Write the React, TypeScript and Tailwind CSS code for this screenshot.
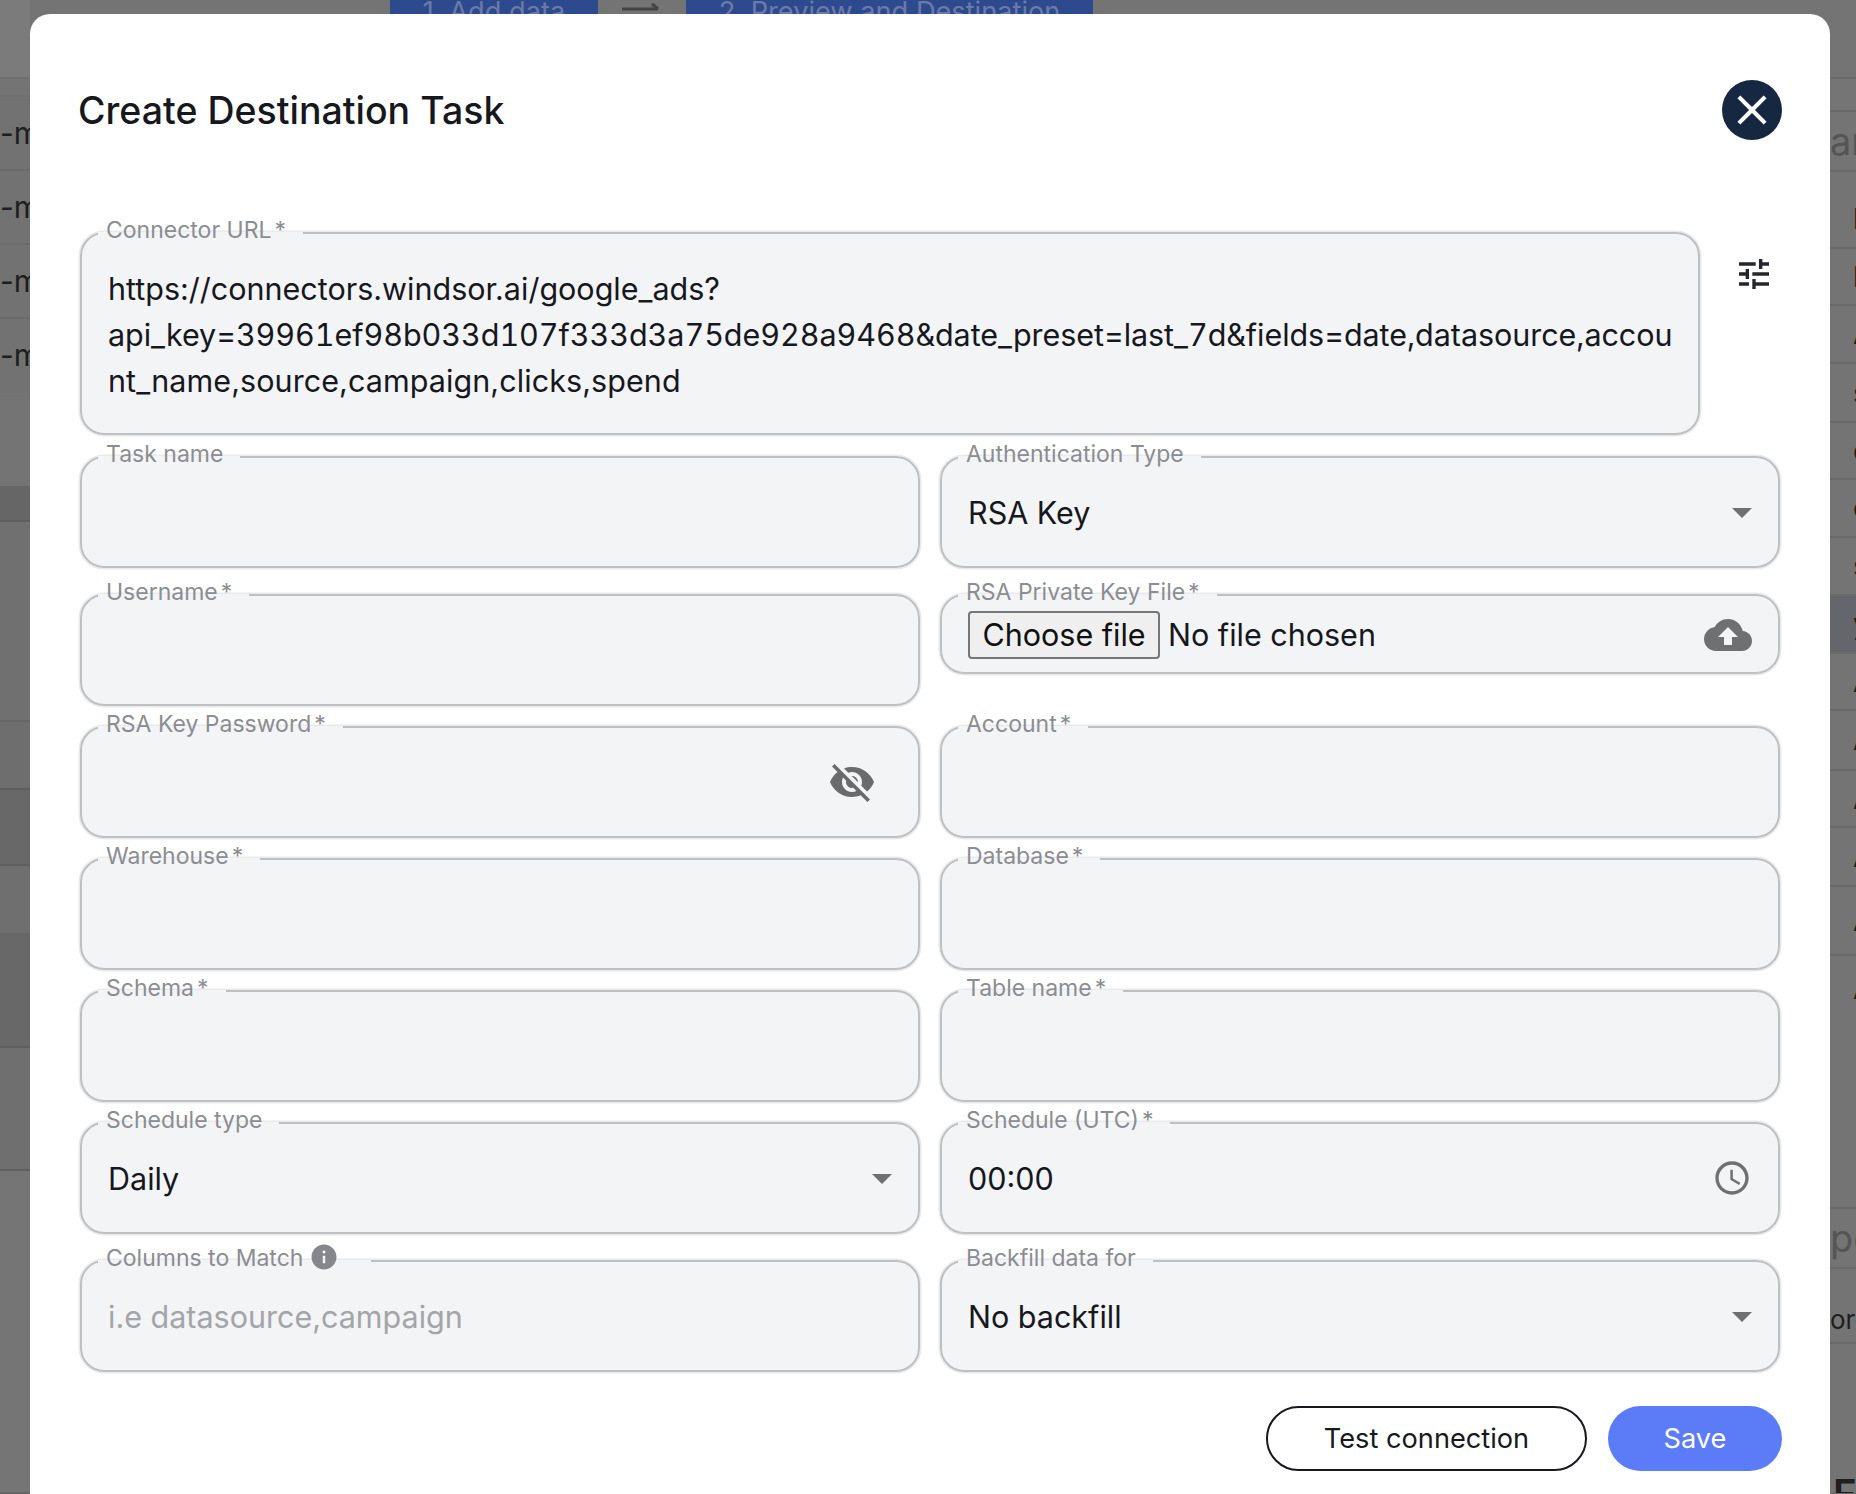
import React from "react";
import { MdTune, MdCloudUpload, MdVisibilityOff, MdAccessTime, MdInfo, MdClose } from "react-icons/md";

const font = { fontFamily: "Inter, 'Liberation Sans', sans-serif" };

function Field({
  label,
  required,
  h = "h-[125px]",
  className = "",
  info,
  children,
}: {
  label: string;
  required?: boolean;
  h?: string;
  className?: string;
  info?: boolean;
  children?: React.ReactNode;
}) {
  return (
    <fieldset
      className={`${h} ${className} min-w-0 w-full rounded-[24px] border-2 border-[#bfc0c2] bg-[#f3f4f6] p-0 shadow-[0_0_0_1.5px_#e8e9eb] flex flex-col`}
    >
      <legend className={`ml-[16px] flex h-[28px] items-center pl-[8px] ${info ? "pr-[32px]" : "pr-[17px]"} text-[23px] leading-[28px] text-[#8b8d92]`}>
        <span className="-translate-y-[3px]">{label}</span>
        {required && <span className="ml-[3px] -translate-y-[3px]">*</span>}
        {info && <MdInfo className="ml-[6px] -mt-[8px] text-[#85878c]" size={30} />}
      </legend>
      {children}
    </fieldset>
  );
}

function Value({ children, muted }: { children?: React.ReactNode; muted?: boolean }) {
  return (
    <div className={`flex flex-1 items-center justify-between pb-[12px] pl-[26px] pr-[20px] text-[30.5px] leading-[46px] ${muted ? "text-[#a3a5a9]" : "text-[#16181d]"}`}>
      {children}
    </div>
  );
}

function Caret() {
  return (
    <svg width="20" height="10" viewBox="0 0 20 10" className="mr-[6px] shrink-0">
      <path d="M0 0h20L10 10z" fill="#6f7072" />
    </svg>
  );
}

const leftRows = [
  { h: "h-[79px]", c: "bg-[#7b7b7b] border-[#6f6f6f]", t: "" },
  { h: "h-[18px]", c: "bg-[#747474] border-[#707070]", t: "" },
  { h: "h-[74px]", c: "bg-[#727272] border-[#6b6b6b]", t: "-m" },
  { h: "h-[74px]", c: "bg-[#727272] border-[#6b6b6b]", t: "-m" },
  { h: "h-[74px]", c: "bg-[#727272] border-[#6b6b6b]", t: "-m" },
  { h: "h-[74px]", c: "bg-[#727272] border-[#727272]", t: "-m" },
  { h: "h-[93px]", c: "bg-[#747474] border-[#747474]", t: "" },
  { h: "h-[36px]", c: "bg-[#666666] border-[#5f5f5f]", t: "" },
  { h: "h-[200px]", c: "bg-[#707070] border-[#666666]", t: "" },
  { h: "h-[68px]", c: "bg-[#6e6e6e] border-[#5d5d5d]", t: "" },
  { h: "h-[76px]", c: "bg-[#686868] border-[#5f5f5f]", t: "" },
  { h: "h-[67px]", c: "bg-[#6f6f6f] border-[#6f6f6f]", t: "" },
  { h: "h-[115px]", c: "bg-[#686868] border-[#5f5f5f]", t: "" },
  { h: "h-[123px]", c: "bg-[#6f6f6f] border-[#5f5f5f]", t: "" },
  { h: "h-[323px]", c: "bg-[#757575] border-[#666666]", t: "" },
];

const rightRows = [
  { h: "h-[79px]", t: "" },
  { h: "h-[33px]", t: "", c: "bg-[#757575]" },
  { h: "h-[60px]", t: "ar", c: "text-[#555]", x: "pl-0 text-[38px]" },
  { h: "h-[77px]", t: "l", y: "items-start pt-[26px]" },
  { h: "h-[57px]", t: "l" },
  { h: "h-[58px]", t: "A" },
  { h: "h-[59px]", t: "s" },
  { h: "h-[57px]", t: "c" },
  { h: "h-[58px]", t: "c" },
  { h: "h-[58px]", t: "s" },
  { h: "h-[58px]", t: "y", c: "bg-[#65656c]" },
  { h: "h-[57px]", t: "A" },
  { h: "h-[60px]", t: "A" },
  { h: "h-[57px]", t: "A" },
  { h: "h-[59px]", t: "A" },
  { h: "h-[69px]", t: "A" },
  { h: "h-[253px]", t: "A", y: "items-start pt-[12px]" },
  { h: "h-[60px]", t: "pe", c: "text-[#555]", x: "pl-0 text-[38px]" },
  { h: "h-[75px]", t: "or-", x: "pl-0 text-[26px]", y: "items-start pt-[31px]" },
  { h: "h-[151px]", t: "F", x: "pl-[3px] text-[40px] leading-[40px] font-semibold", y: "items-start pt-[130px]" },
];

export default function App() {
  return (
    <div style={font} className="relative h-[1494px] w-[1856px] overflow-hidden bg-[#747474]">
      {/* dimmed page behind the dialog */}
      <div className="flex h-[14px] items-start overflow-hidden pl-[390px] text-[27.2px] leading-[30px] text-[#6a7ba8]">
        <div className="flex h-[14px] w-[208px] justify-center bg-[#2e4a8e]">
          <span className="-mt-[3px] whitespace-nowrap">1. Add data</span>
        </div>
        <svg width="40" height="14" viewBox="0 0 40 14" className="ml-[24px]">
          <path d="M0 9h36M30 4l6 5" stroke="#444444" strokeWidth="3" fill="none" />
        </svg>
        <div className="ml-[24px] flex h-[14px] w-[407px] justify-center bg-[#2e4a8e]">
          <span className="-mt-[3px] whitespace-nowrap">2. Preview and Destination</span>
        </div>
      </div>
      <div className="absolute left-0 top-0 w-[30px] overflow-hidden">
        {leftRows.map((r, i) => (
          <div key={i} className={`${r.h} ${r.c} flex items-center overflow-hidden whitespace-nowrap border-b-2 text-[30px] text-[#1e1e1e]`}>
            {r.t}
          </div>
        ))}
      </div>
      <div className="absolute right-0 top-0 w-[26px] overflow-hidden">
        {rightRows.map((r, i) => (
          <div
            key={i}
            className={`${r.h} ${r.c ?? ""} ${r.x ?? "pl-[23px] text-[28px]"} ${r.y ?? "items-center"} flex overflow-hidden whitespace-nowrap border-b-2 border-[#696969] text-[#1e1e1e]`}
          >
            {r.t}
          </div>
        ))}
      </div>

      {/* dialog */}
      <div className="absolute left-[30px] top-[14px] h-[1500px] w-[1800px] rounded-[20px] bg-white px-[48px] pt-[66px]">
        <div className="flex h-[60px] items-center justify-between">
          <h1 className="mt-[2px] text-[37.5px] font-medium leading-[60px] text-[#16181d]">Create Destination Task</h1>
          <button className="flex h-[60px] w-[60px] items-center justify-center rounded-full bg-[#152741] text-white">
            <MdClose size={50} />
          </button>
        </div>

        <div className="mt-[79px] flex items-start px-[2px]">
          <Field label="Connector URL" required h="h-[216px]" className="!w-[1620px] shrink-0">
            <div className="whitespace-nowrap px-[26px] pt-[19px] text-[30.5px] leading-[46px] text-[#16181d]">
              https://connectors.windsor.ai/google_ads?
              <br />
              <span className="tabular-nums tracking-[-0.05px]">
                api_key=39961ef98b033d107f333d3a75de928a9468&amp;date_preset=last_7d&amp;fields=date,datasource,accou
              </span>
              <br />
              <span className="tracking-[0.08px]">nt_name,source,campaign,clicks,spend</span>
            </div>
          </Field>
          <MdTune size={40} className="ml-[34px] mt-[35px] text-[#24262b]" />
        </div>

        <div className="grid grid-cols-2 gap-x-[20px] px-[2px]">
          <Field label="Task name" className="mt-[8px]" />
          <Field label="Authentication Type" className="mt-[8px]">
            <Value>
              RSA Key
              <Caret />
            </Value>
          </Field>

          <Field label="Username" required className="mt-[13px]" />
          <Field label="RSA Private Key File" required h="h-[93px]" className="mt-[13px]">
            <div className="flex flex-1 items-center justify-between pb-[11px] pl-[26px] pr-[26px] text-[30.5px] text-[#16181d]">
              <div className="flex items-center">
                <span className="flex h-[48px] w-[192px] items-center justify-center rounded-[4px] border-2 border-[#767676] bg-[#efefef] text-[#111]">
                  Choose file
                </span>
                <span className="ml-[8px]">No file chosen</span>
              </div>
              <MdCloudUpload size={48} className="text-[#6f7072]" />
            </div>
          </Field>

          <Field label="RSA Key Password" required className="mt-[7px]">
            <Value>
              <span />
              <MdVisibilityOff size={48} className="mb-[2px] mr-[22px] text-[#6a6b6d]" />
            </Value>
          </Field>
          <Field label="Account" required className="mt-[7px]" />

          <Field label="Warehouse" required className="mt-[7px]" />
          <Field label="Database" required className="mt-[7px]" />

          <Field label="Schema" required className="mt-[7px]" />
          <Field label="Table name" required className="mt-[7px]" />

          <Field label="Schedule type" className="mt-[7px]">
            <Value>
              Daily
              <Caret />
            </Value>
          </Field>
          <Field label="Schedule (UTC)" required className="mt-[7px]">
            <Value>
              00:00
              <MdAccessTime size={40} className="mb-[2px] mr-[6px] text-[#6f7072]" />
            </Value>
          </Field>

          <Field label="Columns to Match" info className="mt-[13px]">
            <Value muted>i.e datasource,campaign</Value>
          </Field>
          <Field label="Backfill data for" className="mt-[13px]">
            <Value>
              No backfill
              <Caret />
            </Value>
          </Field>
        </div>

        <div className="mt-[34px] flex justify-end gap-[21px]">
          <button className="h-[65px] w-[321px] rounded-full border-2 border-[#16181d] bg-white pt-[2px] text-[27.2px] text-[#16181d]">
            Test connection
          </button>
          <button className="h-[65px] w-[174px] rounded-full bg-[#5b7cf6] pt-[2px] text-[27.2px] text-white">Save</button>
        </div>
      </div>
    </div>
  );
}
